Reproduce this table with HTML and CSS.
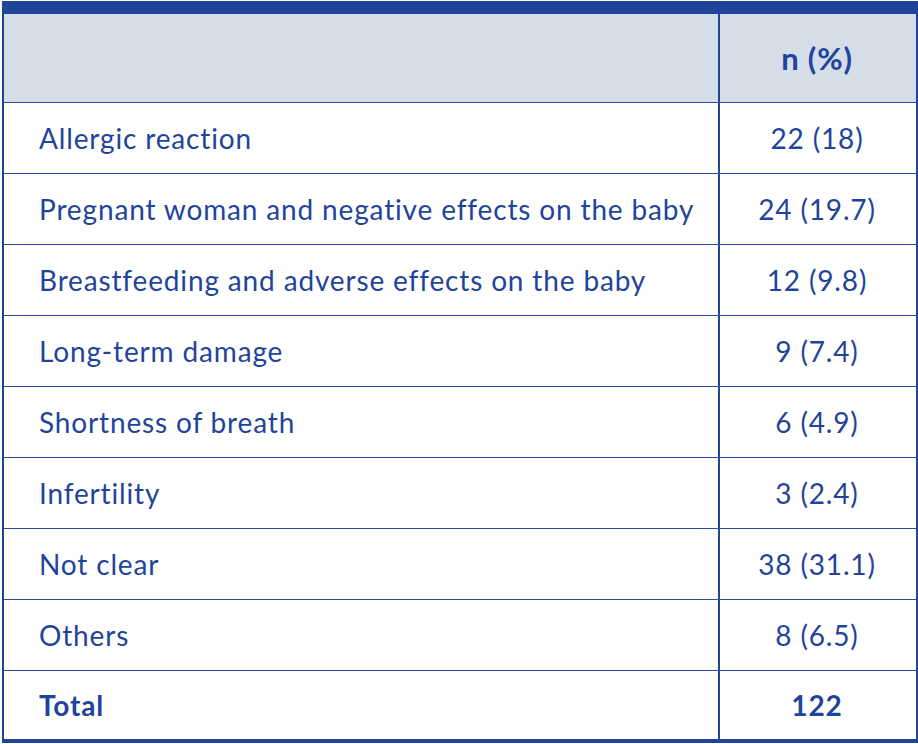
FILE: index.html
```html
<!DOCTYPE html>
<html>
<head>
<meta charset="utf-8">
<link rel="stylesheet" href="styles.css">
</head>
<body>
<div class="wrap">
  <div class="row head">
    <div class="c1"></div>
    <div class="c2 bold big">n (%)</div>
  </div>
  <div class="row"><div class="c1">Allergic reaction</div><div class="c2">22 (18)</div></div>
  <div class="row"><div class="c1">Pregnant woman and negative effects on the baby</div><div class="c2">24 (19.7)</div></div>
  <div class="row"><div class="c1">Breastfeeding and adverse effects on the baby</div><div class="c2">12 (9.8)</div></div>
  <div class="row"><div class="c1">Long-term damage</div><div class="c2">9 (7.4)</div></div>
  <div class="row"><div class="c1">Shortness of breath</div><div class="c2">6 (4.9)</div></div>
  <div class="row"><div class="c1">Infertility</div><div class="c2">3 (2.4)</div></div>
  <div class="row"><div class="c1">Not clear</div><div class="c2">38 (31.1)</div></div>
  <div class="row"><div class="c1">Others</div><div class="c2">8 (6.5)</div></div>
  <div class="row total"><div class="c1 bold">Total</div><div class="c2 bold">122</div></div>
</div>
</body>
</html>
```
FILE: styles.css
```css
html, body { margin: 0; padding: 0; background: #fff; }
body { padding: 1px 0 0 2px; }
.wrap {
  width: 912px;
  border-top: 13px solid #1f449a;
  border-left: 2px solid #1f449a;
  border-right: 2px solid #1f449a;
  border-bottom: 4px solid #1f449a;
  font-family: Lato, "Open Sans", sans-serif;
  color: #1f449a;
  font-size: 28px;
  letter-spacing: 0.85px;
}
.row {
  display: grid;
  grid-template-columns: 716px 1fr;
  height: 70px;
  border-bottom: 1px solid #2a4e9e;
}
.row.head { height: 88px; background: #d5dde9; }
.row.total { height: 68px; border-bottom: none; }
.c1, .c2 { display: flex; align-items: center; }
.c1 { padding-left: 35px; border-right: 2px solid #1f449a; }
.c2 { justify-content: center; padding-right: 2px; }
.bold { font-weight: 700; }
.big { font-size: 31px; }
```
